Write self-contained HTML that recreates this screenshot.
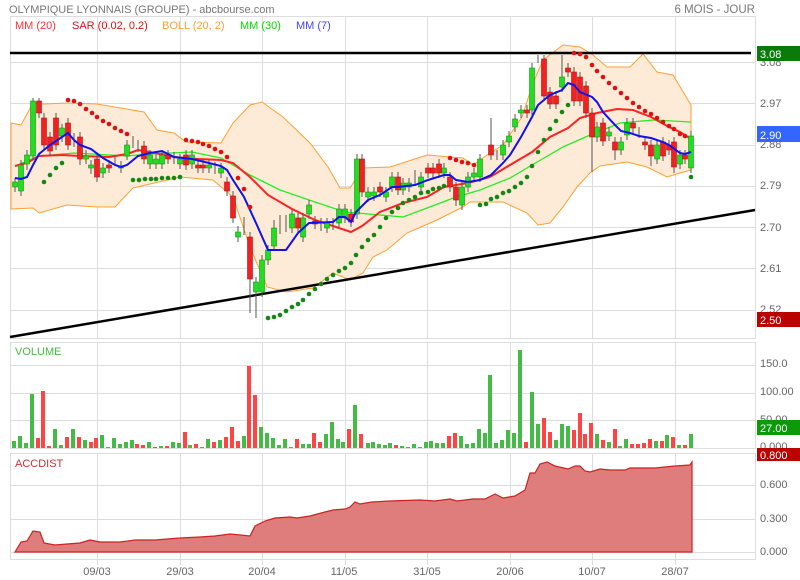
<!DOCTYPE html>
<html><head><meta charset="utf-8"><style>
html,body{margin:0;padding:0;background:#fff;width:800px;height:580px;overflow:hidden}
svg{display:block;font-family:"Liberation Sans",sans-serif}
</style></head><body>
<svg width="800" height="580" viewBox="0 0 800 580" xmlns="http://www.w3.org/2000/svg">
<text x="9" y="13" font-size="11" fill="#777">OLYMPIQUE LYONNAIS (GROUPE) - abcbourse.com</text>
<text x="755" y="13" font-size="11.5" fill="#777" text-anchor="end">6 MOIS - JOUR</text>
<!-- panels -->
<g fill="none" stroke="#ddd" stroke-width="1">
<rect x="10.5" y="16.5" width="745" height="322"/>
<rect x="10.5" y="342.5" width="745" height="106"/>
<rect x="10.5" y="453.5" width="745" height="106"/>
<path d="M97.5 17V338M180.5 17V338M262.5 17V338M345.5 17V338M427.5 17V338M510.5 17V338M592.5 17V338M675.5 17V338
M97.5 343V448M180.5 343V448M262.5 343V448M345.5 343V448M427.5 343V448M510.5 343V448M592.5 343V448M675.5 343V448
M97.5 454V565M180.5 454V565M262.5 454V565M345.5 454V565M427.5 454V565M510.5 454V565M592.5 454V565M675.5 454V565
M11 62.5H755M11 103.5H755M11 145.5H755M11 186.5H755M11 227.5H755M11 268.5H755M11 310.5H755
M11 365.5H755M11 393.5H755M11 420.5H755
M11 485.5H755M11 519.5H755M11 552.5H755"/>
</g>
<!-- legend -->
<g font-size="11">
<text x="15" y="29" fill="#ff3333">MM (20)</text>
<text x="72" y="29" fill="#dd1111">SAR (0.02, 0.2)</text>
<text x="162" y="29" fill="#ffa033">BOLL (20, 2)</text>
<text x="240" y="29" fill="#00dd00">MM (30)</text>
<text x="296" y="29" fill="#4444ff">MM (7)</text>
</g>
<!-- bollinger -->
<path fill="#fdebd7" stroke="#ffa033" stroke-width="1" d="M11 123L21 125L33 103L44 104L67 103L97 104L144 112L157 130L174 133L186 142L221 143L233 123L250 105L262 102L283 117L310 143L328 167L340 188L350 188L363 168L390 167L427 155L463 158L473 165L487 155L503 145L522 117L533 83L543 60L563 45L580 47L593 55L607 67L630 67L643 54L657 72L673 75L691 105
L691 170L680 173L667 177L647 167L627 162L600 166L590 173L577 187L563 207L550 223L538 225L527 213L503 202L470 202L463 207L437 220L407 233L387 250L373 257L363 273L350 280L333 273L313 288L287 292L267 287L250 247L233 197L213 180L180 177L133 188L115 207L97 207L67 205L39 213L33 208L11 209Z"/>
<!-- black lines -->
<path d="M10 53H751" stroke="#000" stroke-width="2.5"/>
<path d="M10 337L755 210" stroke="#000" stroke-width="2.5"/>
<!-- MM30 -->
<polyline fill="none" stroke="#22ee22" stroke-width="1.3" points="15,166 39,156 74,153 127,156 150,154 192,152 221,158 250,175 280,190 315,202 345,212 380,215 403,217 427,208 456,197 480,190 510,178 532,165 563,147 590,135 620,123 653,120 691,122"/>
<!-- MM20 -->
<polyline fill="none" stroke="#ff2222" stroke-width="2" points="15,166 27,163 39,156 62,155 80,156 109,157 127,154 138,150 150,152 174,157 198,159 221,160 233,163 250,177 268,195 292,209 315,220 339,228 351,232 362,226 380,212 403,203 427,197 444,187 468,183 490,177 510,165 532,152 550,137 568,128 580,118 597,113 617,109 633,110 651,117 669,127 680,132 691,139"/>
<g stroke="#555" stroke-width="1">
<path d="M15 178V192M21 160V196M27 150V170M33 98V160M39 98V118M44 113V150M50 132V156M56 113V150M62 124V142M68 118V150M74 133V147M80 132V165M86 150V164M91 160V174M97 154V182M103 163V178M109 160V173M115 155V165M121 161V173M127 140V160M133 136V148M138 140V152M144 141V164M150 150V169M156 154V169M162 150V169M168 150V164M174 152V164M180 154V169M186 150V170M192 150V169M198 160V173M203 160V173M209 160V173M215 162V174M221 163V178M227 177V196M233 191V223M238 226V242M244 217V235M250 232V313M256 277V318M262 255V297M268 245V265M274 220V251M280 215V234M286 215V232M292 209V233M298 213V233M303 213V242M309 200V219M315 216V229M321 218V231M327 218V233M333 218V230M339 204V228M345 204V223M351 209V227M357 154V219M362 154V197M368 187V202M374 187V201M380 182V197M386 187V202M392 172V192M398 172V195M403 178V195M409 178V192M415 170V184M421 172V192M428 163V178M433 163V178M439 159V178M444 163V178M450 172V192M456 182V206M462 182V210M468 172V192M474 168V182M480 154V182M491 118V160M497 150V160M503 140V160M509 131V147M515 114V132M521 105V118M527 105V118M532 63V115M538 55V63M544 55V101M550 87V109M556 91V109M562 55V92M568 63V77M574 67V106M580 72V106M586 81V118M592 108V172M597 122V142M603 118V146M609 127V141M615 137V160M621 137V155M627 118V140M633 118V133M639 127V138M645 137V150M651 140V166M657 140V164M663 137V161M669 140V155M674 137V173M680 150V169M685 150V164M691 131V173"/>
</g>
<g stroke-width="0.6">
<g fill="#22dd22" stroke="#119911">
<rect x="12.5" y="182" width="5" height="5"/><rect x="18.5" y="165" width="5" height="26"/><rect x="24.5" y="155" width="5" height="9"/><rect x="30.5" y="101" width="5" height="55"/><rect x="59.5" y="128" width="5" height="8"/><rect x="83.5" y="156" width="5" height="3"/><rect x="88.5" y="165" width="5" height="3"/><rect x="100.5" y="168" width="5" height="5"/><rect x="118.5" y="166" width="5" height="2"/><rect x="124.5" y="145" width="5" height="11"/><rect x="147.5" y="155" width="5" height="9"/><rect x="153.5" y="159" width="5" height="5"/><rect x="159.5" y="155" width="5" height="9"/><rect x="177.5" y="159" width="5" height="5"/><rect x="189.5" y="155" width="5" height="9"/><rect x="206.5" y="165" width="5" height="3"/><rect x="218.5" y="168" width="5" height="5"/><rect x="235.5" y="232" width="5" height="5"/><rect x="253.5" y="282" width="5" height="10"/><rect x="259.5" y="260" width="5" height="32"/><rect x="265.5" y="250" width="5" height="10"/><rect x="271.5" y="228" width="5" height="18"/><rect x="289.5" y="214" width="5" height="14"/><rect x="300.5" y="218" width="5" height="19"/><rect x="306.5" y="205" width="5" height="9"/><rect x="324.5" y="223" width="5" height="5"/><rect x="336.5" y="209" width="5" height="14"/><rect x="342.5" y="209" width="5" height="9"/><rect x="354.5" y="159" width="5" height="55"/><rect x="365.5" y="192" width="5" height="5"/><rect x="371.5" y="192" width="5" height="4"/><rect x="383.5" y="192" width="5" height="5"/><rect x="389.5" y="177" width="5" height="10"/><rect x="400.5" y="183" width="5" height="7"/><rect x="406.5" y="183" width="5" height="4"/><rect x="418.5" y="177" width="5" height="10"/><rect x="441.5" y="168" width="5" height="5"/><rect x="459.5" y="187" width="5" height="18"/><rect x="465.5" y="177" width="5" height="10"/><rect x="471.5" y="173" width="5" height="4"/><rect x="477.5" y="159" width="5" height="18"/><rect x="500.5" y="145" width="5" height="10"/><rect x="506.5" y="136" width="5" height="6"/><rect x="512.5" y="119" width="5" height="8"/><rect x="518.5" y="110" width="5" height="3"/><rect x="529.5" y="68" width="5" height="42"/><rect x="559.5" y="77" width="5" height="10"/><rect x="594.5" y="127" width="5" height="10"/><rect x="606.5" y="132" width="5" height="4"/><rect x="618.5" y="142" width="5" height="8"/><rect x="624.5" y="123" width="5" height="12"/><rect x="654.5" y="145" width="5" height="14"/><rect x="677.5" y="155" width="5" height="9"/><rect x="688.5" y="136" width="5" height="32"/>
</g>
<g fill="#ee2222" stroke="#bb1111">
<rect x="36.5" y="101" width="5" height="12"/><rect x="41.5" y="118" width="5" height="27"/><rect x="47.5" y="137" width="5" height="14"/><rect x="53.5" y="118" width="5" height="27"/><rect x="65.5" y="123" width="5" height="22"/><rect x="77.5" y="137" width="5" height="22"/><rect x="94.5" y="159" width="5" height="18"/><rect x="106.5" y="165" width="5" height="3"/><rect x="141.5" y="146" width="5" height="13"/><rect x="165.5" y="155" width="5" height="4"/><rect x="183.5" y="155" width="5" height="10"/><rect x="195.5" y="165" width="5" height="3"/><rect x="200.5" y="165" width="5" height="3"/><rect x="224.5" y="182" width="5" height="9"/><rect x="230.5" y="196" width="5" height="22"/><rect x="247.5" y="237" width="5" height="42"/><rect x="295.5" y="218" width="5" height="10"/><rect x="312.5" y="221" width="5" height="3"/><rect x="348.5" y="214" width="5" height="8"/><rect x="359.5" y="159" width="5" height="33"/><rect x="377.5" y="187" width="5" height="5"/><rect x="395.5" y="177" width="5" height="13"/><rect x="425.5" y="168" width="5" height="5"/><rect x="430.5" y="168" width="5" height="5"/><rect x="436.5" y="164" width="5" height="9"/><rect x="447.5" y="177" width="5" height="10"/><rect x="453.5" y="187" width="5" height="13"/><rect x="488.5" y="145" width="5" height="10"/><rect x="524.5" y="110" width="5" height="3"/><rect x="541.5" y="59" width="5" height="37"/><rect x="547.5" y="92" width="5" height="12"/><rect x="553.5" y="96" width="5" height="8"/><rect x="565.5" y="68" width="5" height="4"/><rect x="571.5" y="72" width="5" height="29"/><rect x="577.5" y="77" width="5" height="24"/><rect x="583.5" y="86" width="5" height="27"/><rect x="589.5" y="113" width="5" height="24"/><rect x="600.5" y="123" width="5" height="18"/><rect x="612.5" y="142" width="5" height="8"/><rect x="630.5" y="123" width="5" height="5"/><rect x="642.5" y="142" width="5" height="3"/><rect x="648.5" y="145" width="5" height="11"/><rect x="660.5" y="142" width="5" height="14"/><rect x="666.5" y="145" width="5" height="5"/><rect x="671.5" y="142" width="5" height="25"/><rect x="682.5" y="155" width="5" height="4"/>
</g>
</g>
<!-- MM7 -->
<polyline fill="none" stroke="#1111ee" stroke-width="2" points="15,178 21,179 27,177 33,165 39,154 50,145 62,137 68,133 74,140 80,145 91,149 103,158 115,165 121,167 127,165 138,156 150,153 162,151 174,157 192,159 209,163 221,166 227,170 233,180 244,197 256,223 268,250 286,250 298,233 309,223 333,222 339,217 345,217 351,222 356,212 368,200 380,195 392,187 398,187 415,185 428,180 444,175 450,175 456,180 468,182 480,180 491,175 503,163 510,155 521,137 532,117 538,105 550,95 562,90 568,83 574,85 580,92 592,97 597,102 603,112 615,125 621,131 630,133 639,136 651,138 663,142 669,145 680,153 685,154 691,152"/>
<!-- SAR -->
<g fill="#dd1111">
<circle cx="68" cy="100" r="2.3"/><circle cx="74" cy="101" r="2.3"/><circle cx="80" cy="104" r="2.3"/><circle cx="86" cy="109" r="2.3"/><circle cx="92" cy="113" r="2.3"/><circle cx="97" cy="117" r="2.3"/><circle cx="103" cy="121" r="2.3"/><circle cx="109" cy="124" r="2.3"/><circle cx="115" cy="128" r="2.3"/><circle cx="121" cy="131" r="2.3"/><circle cx="127" cy="134" r="2.3"/>
<circle cx="186" cy="140" r="2.3"/><circle cx="192" cy="141" r="2.3"/><circle cx="198" cy="142" r="2.3"/><circle cx="203" cy="144" r="2.3"/><circle cx="209" cy="146" r="2.3"/><circle cx="215" cy="149" r="2.3"/><circle cx="221" cy="152" r="2.3"/><circle cx="227" cy="157" r="2.3"/><circle cx="238" cy="178" r="2.3"/><circle cx="244" cy="189" r="2.3"/><circle cx="250" cy="207" r="2.3"/>
<circle cx="450" cy="158" r="2.3"/><circle cx="456" cy="160" r="2.3"/><circle cx="462" cy="162" r="2.3"/><circle cx="468" cy="163" r="2.3"/><circle cx="474" cy="165" r="2.3"/>
<circle cx="574" cy="53" r="2.3"/><circle cx="580" cy="54" r="2.3"/><circle cx="586" cy="57" r="2.3"/><circle cx="592" cy="65" r="2.3"/><circle cx="597" cy="71" r="2.3"/><circle cx="603" cy="77" r="2.3"/><circle cx="609" cy="83" r="2.3"/><circle cx="615" cy="88" r="2.3"/><circle cx="621" cy="93" r="2.3"/><circle cx="627" cy="98" r="2.3"/><circle cx="633" cy="103" r="2.3"/><circle cx="639" cy="107" r="2.3"/><circle cx="645" cy="111" r="2.3"/><circle cx="651" cy="114" r="2.3"/><circle cx="657" cy="118" r="2.3"/><circle cx="663" cy="122" r="2.3"/><circle cx="669" cy="126" r="2.3"/><circle cx="674" cy="129" r="2.3"/><circle cx="680" cy="134" r="2.3"/><circle cx="685" cy="136" r="2.3"/>
</g>
<g fill="#118811">
<circle cx="44" cy="182" r="2.3"/><circle cx="50" cy="175" r="2.3"/><circle cx="56" cy="168" r="2.3"/><circle cx="62" cy="163" r="2.3"/>
<circle cx="133" cy="180" r="2.3"/><circle cx="139" cy="180" r="2.3"/><circle cx="145" cy="179" r="2.3"/><circle cx="151" cy="179" r="2.3"/><circle cx="156" cy="179" r="2.3"/><circle cx="162" cy="178" r="2.3"/><circle cx="168" cy="178" r="2.3"/><circle cx="174" cy="178" r="2.3"/><circle cx="180" cy="177" r="2.3"/>
<circle cx="268" cy="318" r="2.3"/><circle cx="274" cy="317" r="2.3"/><circle cx="280" cy="315" r="2.3"/><circle cx="286" cy="311" r="2.3"/><circle cx="292" cy="307" r="2.3"/><circle cx="298" cy="304" r="2.3"/><circle cx="303" cy="300" r="2.3"/><circle cx="309" cy="294" r="2.3"/><circle cx="315" cy="289" r="2.3"/><circle cx="321" cy="284" r="2.3"/><circle cx="327" cy="279" r="2.3"/><circle cx="333" cy="275" r="2.3"/><circle cx="339" cy="271" r="2.3"/><circle cx="345" cy="268" r="2.3"/><circle cx="351" cy="263" r="2.3"/><circle cx="356" cy="255" r="2.3"/><circle cx="362" cy="247" r="2.3"/><circle cx="368" cy="240" r="2.3"/><circle cx="374" cy="235" r="2.3"/><circle cx="380" cy="227" r="2.3"/><circle cx="386" cy="218" r="2.3"/><circle cx="392" cy="212" r="2.3"/><circle cx="398" cy="208" r="2.3"/><circle cx="403" cy="203" r="2.3"/><circle cx="409" cy="200" r="2.3"/><circle cx="415" cy="197" r="2.3"/><circle cx="421" cy="193" r="2.3"/><circle cx="428" cy="192" r="2.3"/><circle cx="433" cy="189" r="2.3"/><circle cx="439" cy="188" r="2.3"/><circle cx="444" cy="186" r="2.3"/>
<circle cx="480" cy="205" r="2.3"/><circle cx="486" cy="204" r="2.3"/><circle cx="491" cy="199" r="2.3"/><circle cx="497" cy="197" r="2.3"/><circle cx="503" cy="193" r="2.3"/><circle cx="509" cy="191" r="2.3"/><circle cx="515" cy="187" r="2.3"/><circle cx="521" cy="183" r="2.3"/><circle cx="527" cy="177" r="2.3"/><circle cx="532" cy="166" r="2.3"/><circle cx="538" cy="152" r="2.3"/><circle cx="544" cy="140" r="2.3"/><circle cx="550" cy="129" r="2.3"/><circle cx="556" cy="121" r="2.3"/><circle cx="562" cy="112" r="2.3"/><circle cx="568" cy="105" r="2.3"/>
<circle cx="691" cy="177" r="2.3"/>
</g>
<!-- volume -->
<g stroke-width="4">
<path stroke="#44bb44" d="M14 448V441M20 448V436M26 448V443M32 448V394M55 448V429M61 448V445M73 448V429M85 448V440M102 448V435M108 448V447M114 448V438M120 448V444M126 448V442M132 448V440M149 448V442M161 448V446M173 448V442M179 448V443M190 448V445M202 448V447M208 448V439M220 448V440M244 448V436M261 448V427M267 448V433M273 448V438M279 448V445M285 448V439M291 448V447M303 448V444M309 448V444M326 448V434M332 448V422M338 448V439M343 448V442M355 448V405M368 448V443M373 448V442M379 448V444M385 448V445M390 448V443M402 448V446M408 448V447M414 448V444M420 448V447M426 448V442M431 448V441M437 448V443M443 448V443M461 448V436M467 448V444M473 448V443M479 448V429M485 448V433M490 448V375M496 448V443M502 448V440M508 448V430M514 448V433M520 448V350M532 448V392M538 448V424M556 448V440M562 448V424M568 448V426M597 448V434M609 448V442M620 448V446M626 448V439M656 448V441M667 448V435M679 448V445M691 448V434"/>
<path stroke="#ff4444" d="M38 448V438M43 448V391M49 448V446M67 448V437M79 448V437M91 448V442M96 448V438M137 448V444M143 448V445M155 448V447M167 448V446M185 448V432M196 448V444M214 448V442M226 448V437M232 448V427M238 448V441M249 448V366M255 448V395M297 448V439M314 448V433M320 448V442M349 448V429M361 448V434M396 448V445M449 448V436M455 448V433M526 448V442M544 448V418M550 448V432M574 448V430M580 448V413M585 448V434M591 448V423M603 448V440M615 448V429M632 448V444M638 448V444M644 448V443M650 448V439M662 448V441M673 448V437M685 448V445"/>
</g>
<text x="15" y="355" font-size="11" fill="#44bb44">VOLUME</text>
<!-- accdist -->
<path fill="#df7c7c" stroke="#cc2222" stroke-width="1.2" d="M15 552L21 542L27 541L33 531L40 532L44 543L55 545L67 544L80 543L90 540L100 542L120 542L135 540L155 540L180 538L200 537L215 536L230 534L250 536L255 526L265 521L275 518L290 517L297 518L310 516L325 512L333 510L345 509L350 507L355 502L360 504L372 502L390 501L420 500L435 501L450 499L457 501L473 499L485 499L495 494L503 498L515 496L525 490L530 473L535 473L540 464L547 462L555 466L568 469L575 466L580 466L585 471L590 472L600 469L610 470L625 470L630 468L655 468L665 467L675 466L690 465L692 462L692 552Z"/>
<text x="15" y="467" font-size="11" fill="#cc3333">ACCDIST</text>
<!-- right axis -->
<g font-size="11" fill="#666">
<text x="760" y="66">3.08</text>
<text x="760" y="107">2.97</text>
<text x="760" y="148">2.88</text>
<text x="760" y="189">2.79</text>
<text x="760" y="231">2.70</text>
<text x="760" y="272">2.61</text>
<text x="760" y="313">2.52</text>
<text x="760" y="367">150.0</text>
<text x="760" y="395">100.00</text>
<text x="760" y="423">50.00</text>
<text x="760" y="450">0.000</text>
<text x="760" y="488">0.600</text>
<text x="760" y="522">0.300</text>
<text x="760" y="555">0.000</text>
</g>
<rect x="757" y="46" width="43" height="15" fill="#0a7a0a"/><text x="760" y="58" font-size="11" fill="#fff">3.08</text>
<rect x="757" y="126" width="43" height="16" fill="#3366ff"/><text x="760" y="139" font-size="11" fill="#fff">2.90</text>
<rect x="757" y="312" width="43" height="15" fill="#bb0000"/><text x="760" y="324" font-size="11" fill="#fff">2.50</text>
<rect x="757" y="420" width="43" height="15" fill="#0a9a0a"/><text x="760" y="432" font-size="11" fill="#fff">27.00</text>
<rect x="757" y="448" width="43" height="13" fill="#bb0000"/><text x="760" y="459" font-size="11" fill="#fff">0.800</text>
<!-- dates -->
<g font-size="11" fill="#666" text-anchor="middle">
<text x="97" y="575">09/03</text><text x="180" y="575">29/03</text><text x="262" y="575">20/04</text><text x="344" y="575">11/05</text><text x="427" y="575">31/05</text><text x="510" y="575">20/06</text><text x="592" y="575">10/07</text><text x="675" y="575">28/07</text>
</g>
</svg>
</body></html>
